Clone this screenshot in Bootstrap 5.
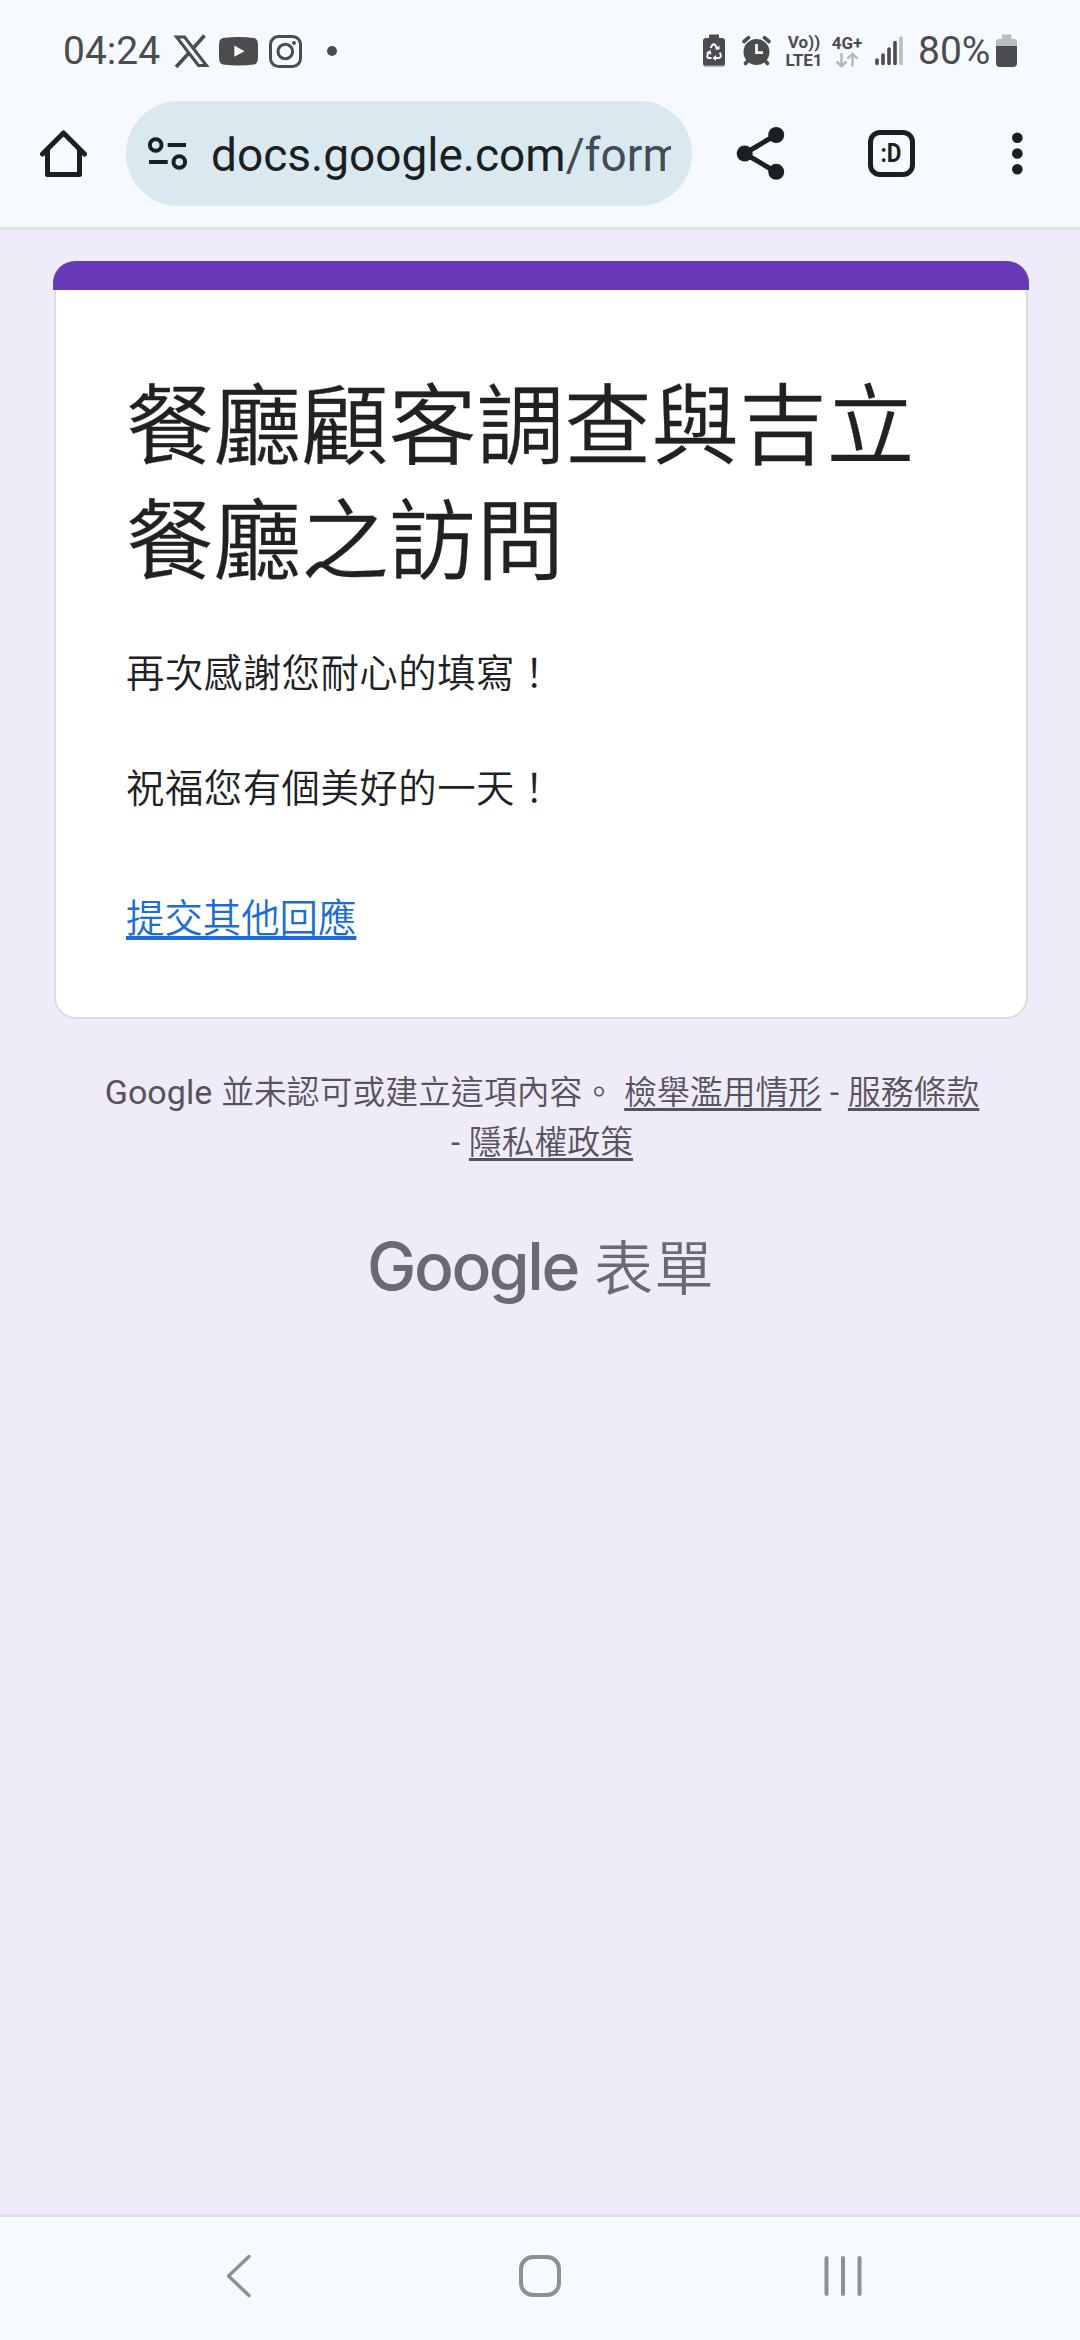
<!DOCTYPE html>
<html lang="zh-Hant">
<head>
<meta charset="utf-8">
<meta name="viewport" content="width=device-width, initial-scale=1">
<title>餐廳顧客調查與吉立餐廳之訪問</title>
<link href="https://cdn.jsdelivr.net/npm/bootstrap@5.3.0/dist/css/bootstrap.min.css" rel="stylesheet">
<style>
  body { font-family: Roboto, "Noto Sans CJK TC", sans-serif; background: #efebf8; height: 2340px; overflow: hidden; }
  svg { display: block; flex: none; }
  .status-bar { height: 101px; padding-left: 63px; background: #f6faff; color: #4a4c4e; }
  .status-text { font-size: 39px; line-height: 44px; flex: none; }
  .status-clock { width: 109px; }
  .status-icons { margin-left: 362px; }
  .status-volte { width: 40px; margin-left: 9px; }
  .status-data { width: 32px; margin-left: 7px; }
  .status-signal { margin-left: 11px; }
  .status-level { width: 74px; margin-left: 14px; }
  .status-cell { margin-left: 4px; }
  .tiny-label { font-size: 17px; line-height: 18px; font-weight: 700; }
  .browser-bar { height: 129px; padding-left: 40px; background: #f6faff; border-bottom: 3px solid #dbe4e9; color: #191f22; }
  .omnibox { width: 566px; height: 105px; margin-left: 39px; padding: 0 21px 0 22px; background: #dae8f0; }
  .url-text { font-size: 46px; line-height: 60px; margin-left: 23px; padding-top: 2px; }
  .url-path { color: #434c53; }
  .toolbar-icons { margin-left: 44px; }
  .form-area { padding: 31px 51px 0 53px; }
  .form-card { margin: 0 1px; border: 2px solid #dadce0; border-top: 0; border-radius: 22px; height: 758px; }
  .theme-strip { height: 29px; margin: 0 -3px; background: #673ab7; border-radius: 22px 22px 0 0; }
  .form-body { padding: 80px 70px 0; color: #202124; font-weight: 350; }
  .form-title { font-size: 87.6px; line-height: 115px; font-weight: 350; -webkit-text-stroke: .3px #202124; }
  .thanks-text { font-size: 38.4px; line-height: 57.6px; letter-spacing: .5px; margin-top: 45px; white-space: pre-line; }
  .line-link { text-decoration: underline; text-decoration-skip-ink: none; color: inherit; }
  .again-link { font-size: 38.4px; line-height: 58px; color: #1a6dd6; text-decoration-thickness: 4px; text-underline-offset: 4px; margin-top: 72px; }
  .disclaimer { font-size: 32.8px; line-height: 50px; color: #57535d; margin: 49px 44px 0 46px; letter-spacing: .05px; word-spacing: .6px; }
  .disclaimer .line-link { text-decoration-thickness: 3px; text-underline-offset: 4px; }
  .cjk-text, .disclaimer .line-link { font-weight: 350; }
  .latin-word { font-size: 34px; line-height: 1; }
  .brand-row { color: #6d6970; margin-top: 57px; gap: 16px; line-height: 80px; }
  .brand-name { font-family: Inter, sans-serif; font-weight: 500; font-size: 66px; letter-spacing: -2.4px; }
  .brand-product { font-size: 59px; letter-spacing: 1.5px; font-weight: 350; font-family: "Noto Sans CJK TC", sans-serif; }
  .nav-keys { height: 126px; background: #f6faff; border-top: 3px solid #dbe4e9; padding: 0 215px 5px; }
</style>
<script src="https://cdn.jsdelivr.net/npm/bootstrap@5.3.0/dist/js/bootstrap.bundle.min.js"></script>
</head>
<body class="d-flex flex-column">

<header>
  <div class="status-bar d-flex align-items-center">
    <span class="status-text status-clock">04:24</span>
    <!-- app notifications -->
    <svg width="166" height="40" viewBox="172 31 166 40">
      <path d="M176.500 37H184.500L206.500 65.500H198.500Z" fill="none" stroke="#4a4c4e" stroke-width="3"/>
      <path d="M204.500 35.500L192.500 49M188.500 53.500L176 67" stroke="#4a4c4e" stroke-width="3.600"/>
      <path d="M223 38Q238.500 36 254 38Q258 38.500 258 45V57Q258 64 254 64.500Q238.500 66.500 223 64.500Q219 64 219 57V45Q219 38.500 223 38Z" fill="#4a4c4e"/>
      <path d="M234.300 45.500V56.700L244.500 51.200Z" fill="#f6faff"/>
      <rect x="270.500" y="36.500" width="30" height="30" rx="8" fill="none" stroke="#4a4c4e" stroke-width="3"/>
      <circle cx="285.300" cy="51.500" r="7.300" fill="none" stroke="#4a4c4e" stroke-width="3"/>
      <circle cx="294" cy="43" r="2" fill="#4a4c4e"/>
      <circle cx="332" cy="51" r="5" fill="#4a4c4e"/>
    </svg>
    <!-- battery protection, alarm -->
    <svg class="status-icons" width="75" height="40" viewBox="700 31 75 40">
      <path d="M709 35.500Q709 34.500 710 34.500H718Q719 34.500 719 35.500V38H722Q725 38 725 41V63Q725 67 721 67H707Q703 67 703 63V41Q703 38 706 38H709Z" fill="#4a4c4e"/>
      <path d="M704 65.500Q705 67 707 67H721Q723 67 724 65.500Z" fill="#b9bcc0"/>
      <path d="M710.500 48L712.300 45.200Q713.800 43.500 715.300 45.200L717.500 49M719.800 52.500L720.800 55Q721 58 718.500 58H715M711.500 58H709Q706.500 57.500 707.500 55L709 52" fill="none" stroke="#f6faff" stroke-width="2"/>
      <path d="M714.500 49.500H719.500V45.500ZM716 55V61L712.500 58ZM706 52.500L710.500 50L711.500 54.500Z" fill="#f6faff"/>
      <circle cx="756.500" cy="52" r="13" fill="#4a4c4e"/>
      <path d="M744 41.500L748.500 37.700M769 41.500L764.500 37.700M748.500 60L745.500 63.500M764.500 60L767.500 63.500" stroke="#4a4c4e" stroke-width="3.600" stroke-linecap="round"/>
      <path d="M756.500 44V52.700H763" fill="none" stroke="#f6faff" stroke-width="2.800"/>
    </svg>
    <div class="tiny-label status-volte text-center">Vo))<br>LTE1</div>
    <div class="tiny-label status-data d-flex flex-column align-items-center">
      <span>4G+</span>
      <svg width="24" height="16" viewBox="835 52 24 16"><path d="M841.500 53V66M836.500 61.500L841.500 66.300L846.500 61.500M852.500 66.500V54M847.500 58.700L852.500 53.900L857.500 58.700" fill="none" stroke="#b4b7bb" stroke-width="2.500"/></svg>
    </div>
    <svg class="status-signal" width="30" height="36" viewBox="874 33 30 36">
      <path d="M877 60V63.500M883 55V63.500M889 49V63.500M895 42.500V63.500" stroke="#4a4c4e" stroke-width="3.600" stroke-linecap="round"/>
      <path d="M901 38V63.500" stroke="#b9bcc0" stroke-width="3.600" stroke-linecap="round"/>
    </svg>
    <span class="status-text status-level">80%</span>
    <svg class="status-cell" width="21" height="40" viewBox="996 31 21 40">
      <path d="M1002 35.500Q1002 34.500 1003 34.500H1010.500Q1011.500 34.500 1011.500 35.500V39H1014Q1017 39 1017 42V46H996V42Q996 39 999 39H1002Z" fill="#b9bcc0"/>
      <path d="M996 46H1017V63Q1017 67 1013 67H1000Q996 67 996 63Z" fill="#4a4c4e"/>
    </svg>
  </div>

  <div class="browser-bar d-flex align-items-start">
    <svg width="47" height="105" viewBox="40 101 47 105">
      <path d="M42.500 154L63.500 133L84.500 154M47.500 150V174.500H79.500V150" fill="none" stroke="#191f22" stroke-width="5" stroke-linecap="round" stroke-linejoin="round"/>
    </svg>
    <div class="omnibox rounded-pill d-flex align-items-center">
      <svg width="40" height="36" viewBox="148 136 40 36" fill="none" stroke="#191f22" stroke-width="4">
        <circle cx="155.700" cy="145" r="5.800"/><circle cx="179.300" cy="162" r="5.800"/>
        <path d="M167.700 145H186M149 162H167.700"/>
      </svg>
      <div class="url-text flex-fill overflow-hidden text-nowrap">docs.google.com<span class="url-path">/form</span></div>
    </div>
    <svg class="toolbar-icons" width="290" height="105" viewBox="736 101 290 105">
      <path d="M776 135L744.500 153.500L776 172" fill="none" stroke="#191f22" stroke-width="5"/>
      <g fill="#191f22">
        <circle cx="744.700" cy="153.500" r="8"/><circle cx="776.200" cy="135" r="8"/><circle cx="776.200" cy="171.800" r="8"/>
        <circle cx="1017.300" cy="137.800" r="5.300"/><circle cx="1017.300" cy="153.500" r="5.300"/><circle cx="1017.300" cy="169.300" r="5.300"/>
      </g>
      <rect x="870.500" y="132.500" width="42" height="42" rx="9.500" fill="none" stroke="#191f22" stroke-width="5"/>
      <text x="891" y="162" font-size="26" font-weight="700" text-anchor="middle" textLength="21" lengthAdjust="spacingAndGlyphs" fill="#191f22">:D</text>
    </svg>
  </div>
</header>

<main class="form-area flex-fill">
  <section class="form-card bg-white">
    <div class="theme-strip"></div>
    <div class="form-body">
      <h1 class="form-title mb-0">餐廳顧客調查與吉立餐廳之訪問</h1>
      <p class="thanks-text mb-0">再次感謝您耐心的填寫！

      祝福您有個美好的一天！</p>
      <a class="line-link again-link d-inline-block" href="#">提交其他回應</a>
    </div>
  </section>
  <p class="disclaimer text-center mb-0"><span class="latin-word">Google</span> <span class="cjk-text">並未認可或建立這項內容。</span> <a class="line-link" href="#">檢舉濫用情形</a> - <a class="line-link" href="#">服務條款</a> - <a class="line-link" href="#">隱私權政策</a></p>
  <div class="brand-row d-flex justify-content-center align-items-baseline">
    <span class="brand-name">Google</span><span class="brand-product">表單</span>
  </div>
</main>

<footer class="nav-keys d-flex justify-content-between align-items-center">
  <svg width="50" height="50" viewBox="215 2252 50 50"><path d="M249 2257.500L228.500 2277L249 2296.500" fill="none" stroke="#8e9193" stroke-width="3.500" stroke-linecap="round" stroke-linejoin="round"/></svg>
  <svg width="50" height="50" viewBox="515 2252 50 50"><rect x="521" y="2258" width="38" height="38" rx="12" fill="none" stroke="#8e9193" stroke-width="4"/></svg>
  <svg width="50" height="50" viewBox="815 2252 50 50"><path d="M826.500 2259V2295M843 2259V2295M859.500 2259V2295" stroke="#8e9193" stroke-width="4" stroke-linecap="round"/></svg>
</footer>
</body>
</html>
